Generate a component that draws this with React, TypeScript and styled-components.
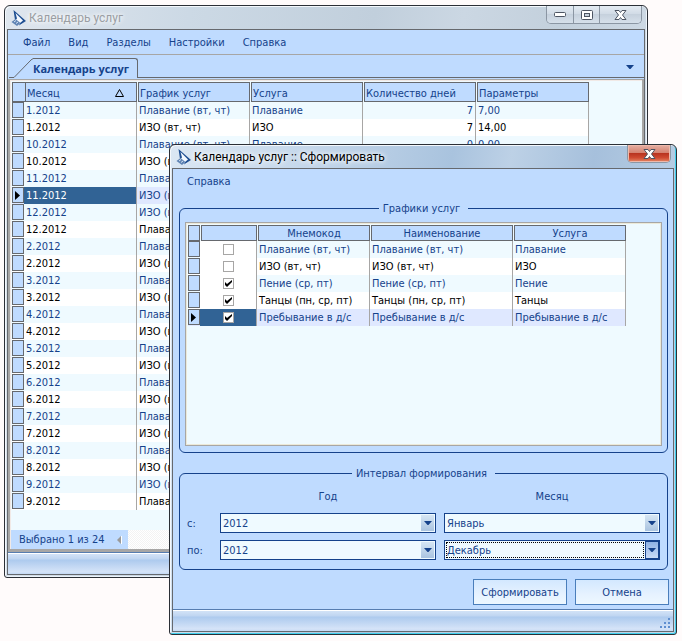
import React from 'react';
import styled, { createGlobalStyle, css } from 'styled-components';

const navy = '#15428b';
const panelBlue = '#bfdbff';
const paleCyan = '#effaff';
const lineGray = '#a7a6a5';
const darkLine = '#66696e';

const GlobalStyle = createGlobalStyle`
  *, *::before, *::after { box-sizing: border-box; }
  body {
    margin: 0;
    background: #fffbfb;
    color: ${navy};
    font: 11px/13px "DejaVu Sans Condensed", Tahoma, "DejaVu Sans", sans-serif;
  }
  button, select, input { font: inherit; color: inherit; margin: 0; }
`;

const Desktop = styled.main`
  display: grid;
  min-height: 100vh;
  align-items: start;
`;

const WindowFrame = styled.section<{ $active?: boolean }>`
  grid-area: 1 / 1;
  border: 1px solid #2b2f36;
  border-radius: 6px 6px 3px 3px;
  padding: 0 2px 2px;
  overflow: hidden;
  min-width: 0;
  background: ${p => (p.$active
    ? 'linear-gradient(100deg, #dbe7f3 0, #c3d6ea 25%, #a9c3de 48%, #bdd1e6 58%, #a6c0dc 72%, #c6d8ea 100%)'
    : 'linear-gradient(100deg, #dfe6ee 0, #ccd9e5 25%, #c1cfdc 50%, #cbd7e3 62%, #c3d0dc 75%, #d7e1ec 100%)')};
  box-shadow: inset 1px 1px 0 #f4f8fc, inset -1px -1px 0 ${p => (p.$active ? '#3fd0ec' : '#eef4fa')};
  margin: ${p => (p.$active ? '144px 5px 6px 169px' : '5px 34px 0 4px')};
`;

const TitleBar = styled.header`
  display: flex;
  align-items: center;
  height: 23px;
  padding-left: 4px;
`;

const Title = styled.h1<{ $active?: boolean }>`
  flex: 1;
  margin: 0 0 0 2px;
  font: 12px/16px Roboto, "Segoe UI", sans-serif;
  color: ${p => (p.$active ? '#000' : '#9a9ea3')};
  text-shadow: 0 0 4px #fff, 0 0 6px #fff;
  white-space: nowrap;
`;

const Caption = styled.div`
  display: flex;
  align-self: flex-start;
  height: 18px;
  margin-right: 3px;
  border: 1px solid #8b96a3;
  border-top: 0;
  border-radius: 0 0 5px 5px;
  overflow: hidden;
`;

const CaptionButton = styled.button<{ $wide?: boolean; $red?: boolean }>`
  display: grid;
  place-items: center;
  padding: 0;
  border: 0;
  width: ${p => (p.$wide ? 42 : 26)}px;
  background: linear-gradient(#e4ebf2, #d0dae5 50%, #c6d1dd 50%, #d6e0ea);
  & + & { border-left: 1px solid #8b96a3; }
  ${p => p.$red && css`
    background: linear-gradient(#e6b0a4, #d4806e 48%, #b93420 50%, #cf4a31 75%, #e58a68);
    box-shadow: inset 0 0 0 1px #eeb9ab;
  `}
`;

const Client = styled.div`
  display: flex;
  flex-direction: column;
  border: 1px solid ${darkLine};
  background: ${panelBlue};
`;

const MenuBar = styled.nav<{ $lined?: boolean }>`
  display: flex;
  gap: 18px;
  padding: ${p => (p.$lined ? '6px 15px 5px' : '6px 14px 4px')};
  ${p => p.$lined && `border-bottom: 1px solid ${lineGray};`}
`;

const MenuItem = styled.button`
  border: 0;
  padding: 0;
  background: none;
  line-height: 13px;
`;

const TabBar = styled.div`
  display: flex;
  align-items: flex-end;
  height: 23px;
`;

const TabSlant = styled.svg`
  display: block;
  flex: none;
`;

const Tab = styled.button`
  height: 20px;
  padding: 0 8px 0 0;
  border: 1px solid ${darkLine};
  border-width: 1px 1px 0 0;
  border-radius: 0 3px 0 0;
  background: none;
  font: bold 11px/16px "Open Sans", "Segoe UI", sans-serif;
  color: ${navy};
  white-space: nowrap;
`;

const TabFill = styled.div`
  display: flex;
  flex: 1;
  justify-content: flex-end;
  align-items: center;
  height: 23px;
  padding: 2px 10px 0 0;
  border-bottom: 1px solid ${darkLine};
`;

const PlainButton = styled.button`
  display: grid;
  padding: 0;
  border: 0;
  background: none;
`;

const MainGridPanel = styled.div`
  margin-top: 1px;
  padding: 2px 0 0 2px;
  border: solid ${lineGray};
  border-width: 1px 2px 3px 2px;
  background: ${paleCyan};
  box-shadow: inset 1px 1px 0 #f1e9e6;
  overflow: hidden;
`;

const GridTable = styled.table<{ $width: number }>`
  width: ${p => p.$width}px;
  table-layout: fixed;
  border-collapse: separate;
  border-spacing: 0;
`;

const Col = styled.col<{ $w: number }>`
  width: ${p => p.$w}px;
`;

const HeadCell = styled.th<{ $tall?: boolean; $marker?: boolean }>`
  height: ${p => (p.$tall ? 20 : 16)}px;
  padding: 0 0 0 ${p => (p.$marker ? 0 : 1)}px;
  font-weight: normal;
`;

const HeadBox = styled.div<{ $tall?: boolean; $center?: boolean }>`
  display: flex;
  align-items: center;
  justify-content: ${p => (p.$center ? 'center' : 'space-between')};
  height: ${p => (p.$tall ? 20 : 16)}px;
  padding: 0 ${p => (p.$tall ? 12 : 1)}px 0 1px;
  border: 1px solid ${darkLine};
  background: ${panelBlue};
  line-height: 13px;
  white-space: nowrap;
  ${p => p.$tall && 'padding-top: 2px;'}
`;

const Row = styled.tr<{ $current?: boolean }>`
  background: #fff;
  color: #000;
  &:nth-child(odd) { background: ${paleCyan}; color: ${navy}; }
  ${p => p.$current && css`
    &&, &&:nth-child(odd) { background: #dfe8ff; color: ${navy}; }
  `}
`;

const Marker = styled.td`
  height: 17px;
  padding: 0 0 1px;
`;

const MarkerBox = styled.div`
  display: grid;
  place-items: center;
  height: 16px;
  border: 1px solid ${darkLine};
  background: ${panelBlue};
  color: #000;
`;

const Cell = styled.td<{ $num?: boolean; $selected?: boolean; $check?: boolean }>`
  height: 17px;
  padding: 0 2px;
  border-right: 1px solid ${lineGray};
  line-height: 13px;
  white-space: nowrap;
  overflow: hidden;
  text-align: ${p => (p.$num ? 'right' : 'left')};
  ${p => p.$check && 'background: #fff; text-align: center;'}
  ${p => p.$selected && 'background: #316395; color: #fff;'}
`;

const CheckBox = styled.input`
  appearance: none;
  display: block;
  width: 11px;
  height: 11px;
  margin: 0 auto;
  border: 1px solid ${lineGray};
  background: #fff;
  &:checked {
    background: #fff url("data:image/svg+xml,%3Csvg xmlns='http://www.w3.org/2000/svg' viewBox='0 0 9 9'%3E%3Cpath d='M1 3v3l2 2 5-5V1L3 5z'/%3E%3C/svg%3E") center / 9px 9px;
  }
`;

const Navigator = styled.div`
  display: flex;
  height: 19px;
  margin: 20px 0 0 -1px;
  background: conic-gradient(#f3f3f3 25%, #fff 0 50%, #f3f3f3 0 75%, #fff 0) 0 0 / 2px 2px;
`;

const NavigatorInfo = styled.div`
  display: flex;
  align-items: center;
  justify-content: space-between;
  width: 117px;
  padding: 0 6px 0 8px;
  background: ${panelBlue};
  white-space: nowrap;
`;

const StatusBar = styled.footer`
  display: flex;
  justify-content: flex-end;
  align-items: flex-end;
  height: 22px;
  padding: 2px;
  border-top: 1px solid #567db1;
  box-shadow: inset 0 1px 0 #fff;
  background: linear-gradient(#d6e5f8 0, #bfd5f1 6px, #adcaee 7px, #d6e4f8 19px, #c2d8f4 21px);
`;

const DialogBody = styled.div`
  display: flex;
  flex-direction: column;
  padding: 10px 4px 4px 6px;
`;

const Group = styled.fieldset`
  min-width: 0;
  margin: 0 1px 14px 0;
  padding: 0;
  border: 1px solid ${navy};
  border-radius: 6px;
`;

const Legend = styled.legend`
  margin: 0 auto;
  padding: 0 8px 0 4px;
  line-height: 13px;
`;

const ListPanel = styled.div`
  height: 224px;
  margin: 7px 5px 6px;
  padding: 2px 0 0 2px;
  border: 1px solid ${lineGray};
  box-shadow: inset 0 0 0 1px #ece9d8;
  background: ${paleCyan};
  overflow: auto;
`;

const Interval = styled.div`
  display: grid;
  grid-template-columns: 25px 1fr 1fr;
  gap: 7px 8px;
  align-items: center;
  padding: 10px 7px 9px;
`;

const ColumnTitle = styled.span`
  margin-bottom: 3px;
  text-align: center;
`;

const Select = styled.select`
  grid-area: 1 / 1 / 2 / 3;
  appearance: none;
  width: 100%;
  min-width: 0;
  height: 18px;
  padding: 0 16px 0 2px;
  border: 0;
  outline: 0;
  background: none;
  line-height: 13px;
`;

const DropMark = styled.span`
  grid-area: 1 / 2;
  display: grid;
  place-items: center;
  margin: 1px 1px 1px 0;
  background: linear-gradient(#d6e6f4, #a9c3e0);
  pointer-events: none;
`;

const SelectWrap = styled.span<{ $focused?: boolean }>`
  display: grid;
  grid-template-columns: 1fr 14px;
  height: 20px;
  border: 1px solid ${navy};
  background: ${paleCyan};
  ${p => p.$focused && css`
    ${Select} {
      grid-area: 1 / 1;
      width: auto;
      height: 16px;
      margin: 1px;
      padding: 0 0 0 1px;
      outline: 1px dotted #000;
      outline-offset: -1px;
    }
    ${DropMark} {
      margin: 0;
      border: 1px solid ${navy};
      background: linear-gradient(#8fb2e4, #c8dbf6);
    }
  `}
`;

const Actions = styled.div`
  display: flex;
  justify-content: flex-end;
  gap: 8px;
  margin-top: -5px;
`;

const ActionButton = styled.button`
  width: 94px;
  height: 26px;
  padding: 0;
  border: 1px solid #4a7ebb;
  background: linear-gradient(#d3e8ff, #e6f2ff 60%, #edf7ff);
`;

const AppIcon = () => (
  <svg width="16" height="18" viewBox="0 0 16 18" aria-hidden="true">
    <path d="M3 1.500 5.500 10 9 16.500 14.500 12z" fill="#f4f9ff" />
    <path d="M2.500 1 4 11 6 9.500 4.500 4 12 11.500 9 14 8 16.500 15 12z" fill="#1f4f92" />
    <path d="M0.500 13 4.500 10 9.500 14 6 17z" fill="#5f83b3" />
    <path d="M3 13 5 11.500M5 14.500 7 13" stroke="#d4e3f3" />
  </svg>
);

const DownArrow = () => (
  <svg width="8" height="4" viewBox="0 0 8 4" aria-hidden="true">
    <path d="M0 0h8L4.500 4h-1z" fill={navy} />
  </svg>
);

const CurrentArrow = () => (
  <svg width="6" height="9" viewBox="0 0 6 9" aria-hidden="true">
    <path d="M0 0v9l5-4.500z" fill="#000" />
  </svg>
);

const CloseGlyph = () => (
  <svg width="13" height="10" viewBox="0 0 13 10" aria-hidden="true">
    <path d="M1 0.500H5L6.500 2.500 8 0.500H12L8.500 5 12 9.500H8L6.500 7.500 5 9.500H1L4.500 5z" fill="#fff" stroke="#4d5563" strokeLinejoin="round" />
  </svg>
);

const swim = 'Плавание (вт, чт)';
const art = 'ИЗО (вт, чт)';
const order = ['1', '10', '11', '12', '2', '3', '4', '5', '6', '7', '8', '9'];
const artFirst = ['12', '9'];

const calendar = order.flatMap(m => {
  const names = artFirst.includes(m) ? [art, swim] : [swim, art];
  return names.map(name => ({
    month: `${m}.2012`,
    name,
    service: name.split(' (')[0],
    days: m === '1' ? '7' : '0',
    params: m === '1' ? (name === swim ? '7,00' : '14,00') : '0,00',
  }));
});

const schedules = [
  { name: swim, service: 'Плавание', on: false },
  { name: art, service: 'ИЗО', on: false },
  { name: 'Пение (ср, пт)', service: 'Пение', on: true },
  { name: 'Танцы (пн, ср, пт)', service: 'Танцы', on: true },
  { name: 'Пребывание в д/с', service: 'Пребывание в д/с', on: true },
];

function Picker({ label, value, focused }: { label: string; value: string; focused?: boolean }) {
  return (
    <SelectWrap $focused={focused}>
      <Select aria-label={label} defaultValue={value}>
        <option>{value}</option>
      </Select>
      <DropMark><DownArrow /></DropMark>
    </SelectWrap>
  );
}

function CalendarWindow() {
  return (
    <WindowFrame aria-label="Календарь услуг">
      <TitleBar>
        <AppIcon />
        <Title>Календарь услуг</Title>
        <Caption>
          <CaptionButton aria-label="Свернуть">
            <svg width="12" height="5" aria-hidden="true"><rect x="0.500" y="0.500" width="11" height="4" rx="1" fill="#fff" stroke="#4d5563" /></svg>
          </CaptionButton>
          <CaptionButton aria-label="Развернуть">
            <svg width="12" height="10" aria-hidden="true">
              <rect x="0.500" y="0.500" width="11" height="9" rx="1" fill="#fff" stroke="#4d5563" />
              <rect x="3.500" y="3.500" width="5" height="3" fill="#c6d1dd" stroke="#4d5563" />
            </svg>
          </CaptionButton>
          <CaptionButton $wide aria-label="Закрыть"><CloseGlyph /></CaptionButton>
        </Caption>
      </TitleBar>
      <Client>
        <MenuBar $lined>
          {['Файл', 'Вид', 'Разделы', 'Настройки', 'Справка'].map(t => <MenuItem key={t}>{t}</MenuItem>)}
        </MenuBar>
        <TabBar>
          <TabSlant width="25" height="20" aria-hidden="true">
            <path d="M1 19.500H6L22 3Q24 0.500 26 0.500" fill="none" stroke={darkLine} />
          </TabSlant>
          <Tab>Календарь услуг</Tab>
          <TabFill><PlainButton aria-label="Список вкладок"><DownArrow /></PlainButton></TabFill>
        </TabBar>
        <MainGridPanel>
          <GridTable $width={577}>
            <colgroup>
              <Col $w={12} />
              {[1, 2, 3, 4, 5].map(n => <Col key={n} $w={113} />)}
            </colgroup>
            <thead>
              <tr>
                <HeadCell $tall $marker><HeadBox $tall /></HeadCell>
                {['Месяц', 'График услуг', 'Услуга', 'Количество дней', 'Параметры'].map((t, i) => (
                  <HeadCell key={t} $tall>
                    <HeadBox $tall>
                      {t}
                      {i === 0 && (
                        <svg width="9" height="8" aria-hidden="true"><path d="M0.500 7.500h8L4.500 0.500z" fill="none" stroke="#000" /></svg>
                      )}
                    </HeadBox>
                  </HeadCell>
                ))}
              </tr>
            </thead>
            <tbody>
              {calendar.map((r, i) => (
                <Row key={i} $current={i === 5}>
                  <Marker><MarkerBox>{i === 5 && <CurrentArrow />}</MarkerBox></Marker>
                  <Cell $selected={i === 5}>{r.month}</Cell>
                  <Cell>{r.name}</Cell>
                  <Cell>{r.service}</Cell>
                  <Cell $num>{r.days}</Cell>
                  <Cell>{r.params}</Cell>
                </Row>
              ))}
            </tbody>
          </GridTable>
          <Navigator>
            <NavigatorInfo>
              Выбрано 1 из 24
              <svg width="5" height="8" aria-hidden="true"><path d="M4 0v8L0 4z" fill="#9a9a9a" /><path d="M4.500 0v8" stroke="#fff" /></svg>
            </NavigatorInfo>
          </Navigator>
        </MainGridPanel>
        <StatusBar />
      </Client>
    </WindowFrame>
  );
}

function GenerateDialog() {
  return (
    <WindowFrame $active role="dialog" aria-label="Сформировать">
      <TitleBar>
        <AppIcon />
        <Title $active>Календарь услуг :: Сформировать</Title>
        <Caption><CaptionButton $wide $red aria-label="Закрыть"><CloseGlyph /></CaptionButton></Caption>
      </TitleBar>
      <Client>
        <MenuBar><MenuItem>Справка</MenuItem></MenuBar>
        <DialogBody>
          <Group>
            <Legend>Графики услуг</Legend>
            <ListPanel>
              <GridTable $width={438}>
                <colgroup>
                  <Col $w={12} /><Col $w={57} /><Col $w={113} /><Col $w={143} /><Col $w={113} />
                </colgroup>
                <thead>
                  <tr>
                    <HeadCell $marker><HeadBox /></HeadCell>
                    {['', 'Мнемокод', 'Наименование', 'Услуга'].map(t => (
                      <HeadCell key={t}><HeadBox $center>{t}</HeadBox></HeadCell>
                    ))}
                  </tr>
                </thead>
                <tbody>
                  {schedules.map((s, i) => (
                    <Row key={s.name} $current={i === 4}>
                      <Marker><MarkerBox>{i === 4 && <CurrentArrow />}</MarkerBox></Marker>
                      <Cell $check $selected={i === 4}>
                        <CheckBox type="checkbox" defaultChecked={s.on} aria-label={s.name} />
                      </Cell>
                      <Cell>{s.name}</Cell>
                      <Cell>{s.name}</Cell>
                      <Cell>{s.service}</Cell>
                    </Row>
                  ))}
                </tbody>
              </GridTable>
            </ListPanel>
          </Group>
          <Group>
            <Legend>Интервал формирования</Legend>
            <Interval>
              <span />
              <ColumnTitle>Год</ColumnTitle>
              <ColumnTitle>Месяц</ColumnTitle>
              <span>с:</span>
              <Picker label="с: Год" value="2012" />
              <Picker label="с: Месяц" value="Январь" />
              <span>по:</span>
              <Picker label="по: Год" value="2012" />
              <Picker label="по: Месяц" value="Декабрь" focused />
            </Interval>
          </Group>
          <Actions>
            <ActionButton>Сформировать</ActionButton>
            <ActionButton>Отмена</ActionButton>
          </Actions>
        </DialogBody>
        <StatusBar>
          <svg width="11" height="11" aria-hidden="true">
            <path d="M8 0h2v2h-2zM4 4h2v2h-2zM8 4h2v2h-2zM0 8h2v2h-2zM4 8h2v2h-2zM8 8h2v2h-2z" fill="#5f8fd0" />
          </svg>
        </StatusBar>
      </Client>
    </WindowFrame>
  );
}

export default function App() {
  return (
    <>
      <GlobalStyle />
      <Desktop>
        <CalendarWindow />
        <GenerateDialog />
      </Desktop>
    </>
  );
}
